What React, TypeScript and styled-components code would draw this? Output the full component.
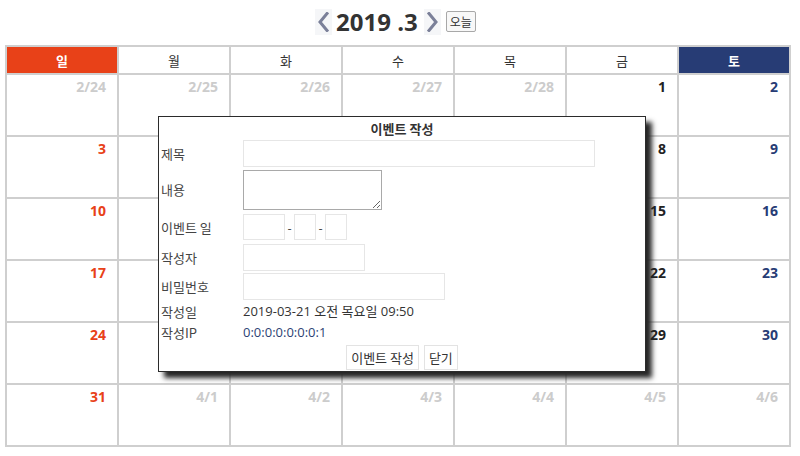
import React from "react";
import styled, { createGlobalStyle } from "styled-components";

const GlobalStyle = createGlobalStyle`
  html, body { margin: 0; padding: 0; background: #fff; }
  body { font-family: "Open Sans", "Noto Sans CJK KR", sans-serif; color: #333; }
`;

const SUN = "#e84118";
const SAT = "#273c75";

const Page = styled.div`
  position: relative;
  width: 800px;
  height: 456px;
  padding: 0 0 0 5px;
  box-sizing: border-box;
`;

const TitleBar = styled.div`
  height: 45px;
  display: flex;
  align-items: center;
  justify-content: center;
  padding: 0 14px 2px 0;
  box-sizing: border-box;
`;

const Arrow = styled.button`
  width: 17px;
  height: 26px;
  border: none;
  padding: 0;
  background: #f5f6f8;
  display: flex;
  align-items: center;
  justify-content: center;
  cursor: pointer;
`;

const Heading = styled.h1`
  margin: 0 6px 0 4px;
  font-family: "Open Sans", sans-serif;
  font-size: 24px;
  font-weight: 700;
  color: #333;
  white-space: pre;
  line-height: 32px;
`;

const TodayButton = styled.button`
  margin-left: 5px;
  height: 21px;
  padding: 0 3px;
  border: 1px solid #a8a8a8;
  border-radius: 2px;
  background: #f8f8f8;
  font-family: "Noto Sans CJK KR", sans-serif;
  font-size: 12px;
  color: #333;
  line-height: 19px;
`;

const Grid = styled.div`
  display: grid;
  grid-template-columns: repeat(7, 110px);
  grid-template-rows: 26px repeat(6, 60px);
  gap: 2px;
  padding: 2px;
  width: 786px;
  box-sizing: border-box;
  background: #cfcfcf;
`;

const HeadCell = styled.div<{ $bg?: string }>`
  background: ${(p) => p.$bg || "#fff"};
  color: ${(p) => (p.$bg ? "#fff" : "#333")};
  font-family: "Noto Sans CJK KR", sans-serif;
  font-size: 13px;
  font-weight: ${(p) => (p.$bg ? 700 : 400)};
  display: flex;
  align-items: center;
  justify-content: center;
`;

const DayCell = styled.div<{ $color: string }>`
  background: #fff;
  color: ${(p) => p.$color};
  font-family: "Open Sans", sans-serif;
  font-size: 14px;
  font-weight: 700;
  text-align: right;
  padding: 2px 11px 0 0;
  line-height: 19px;
`;

const Modal = styled.div`
  position: absolute;
  left: 158px;
  top: 116px;
  width: 488px;
  height: 256px;
  box-sizing: border-box;
  border: 1px solid #2b2b2b;
  background: #fff;
  box-shadow: 6px 6px 5px #262626;
  padding: 0 0 0 2px;
  display: flex;
  flex-direction: column;
  font-family: "Noto Sans CJK KR", sans-serif;
  font-size: 13px;
  line-height: 17px;
  color: #333;
`;

const ModalTitle = styled.div`
  height: 22px;
  display: flex;
  align-items: center;
  justify-content: center;
  font-weight: 700;
  font-size: 13px;
  padding-right: 2px;
`;

const Row = styled.div<{ $h: number }>`
  height: ${(p) => p.$h}px;
  display: flex;
  align-items: center;
`;

const Label = styled.label`
  width: 82px;
  flex: none;
  color: #444;
  line-height: 17px;
`;

const Field = styled.input<{ $w: number }>`
  width: ${(p) => p.$w}px;
  height: 27px;
  box-sizing: border-box;
  border: 1px solid #e6e6e6;
  padding: 0 4px;
  outline: none;
  font-size: 13px;
`;

const SmallField = styled(Field)`
  height: 26px;
`;

const Dash = styled.span`
  width: 9px;
  text-align: center;
  font-size: 12px;
  color: #333;
`;

const Memo = styled.textarea`
  width: 139px;
  height: 40px;
  box-sizing: border-box;
  border: 1px solid #a9a9a9;
  padding: 2px;
  margin: 0;
  outline: none;
  font-size: 13px;
`;

const Value = styled.span<{ $ip?: boolean }>`
  color: ${(p) => (p.$ip ? "#2d3f74" : "#333")};
  font-family: "Open Sans", "Noto Sans CJK KR", sans-serif;
  font-size: 13px;
  line-height: 17px;
`;

const Actions = styled.div`
  height: 28px;
  display: flex;
  align-items: center;
  justify-content: center;
  gap: 5px;
  padding-right: 2px;
`;

const Button = styled.button`
  height: 25px;
  padding: 0 4px;
  border: 1px solid #e3e3e3;
  background: #fff;
  font-family: "Noto Sans CJK KR", sans-serif;
  font-size: 13px;
  color: #333;
  line-height: 23px;
`;

const Chevron = ({ right }: { right?: boolean }) => (
  <svg width="11" height="20" viewBox="0 0 11 20">
    <polyline
      points={right ? "2,1.5 9,10 2,18.5" : "9,1.5 2,10 9,18.5"}
      fill="none"
      stroke="#7b8099"
      strokeWidth="3"
      strokeLinecap="square"
    />
  </svg>
);

type Day = { label: string; other: boolean };

const buildDays = (): Day[] => {
  const days: Day[] = [];
  for (let d = 24; d <= 28; d++) days.push({ label: `2/${d}`, other: true });
  for (let d = 1; d <= 31; d++) days.push({ label: `${d}`, other: false });
  for (let d = 1; d <= 6; d++) days.push({ label: `4/${d}`, other: true });
  return days;
};

const weekNames = ["일", "월", "화", "수", "목", "금", "토"];

const App = () => {
  const days = buildDays();

  const dayColor = (day: Day, index: number) => {
    if (day.other) return "#cccccc";
    if (index % 7 === 0) return SUN;
    if (index % 7 === 6) return SAT;
    return "#222";
  };

  return (
    <Page>
      <GlobalStyle />
      <TitleBar>
        <Arrow>
          <Chevron />
        </Arrow>
        <Heading>{"2019 .3"}</Heading>
        <Arrow>
          <Chevron right />
        </Arrow>
        <TodayButton>오늘</TodayButton>
      </TitleBar>

      <Grid>
        {weekNames.map((name, i) => (
          <HeadCell key={name} $bg={i === 0 ? SUN : i === 6 ? SAT : undefined}>
            {name}
          </HeadCell>
        ))}
        {days.map((day, i) => (
          <DayCell key={day.label + i} $color={dayColor(day, i)}>
            {day.label}
          </DayCell>
        ))}
      </Grid>

      <Modal>
        <ModalTitle>이벤트 작성</ModalTitle>
        <Row $h={29}>
          <Label>제목</Label>
          <Field $w={352} />
        </Row>
        <Row $h={43}>
          <Label>내용</Label>
          <Memo />
        </Row>
        <Row $h={32}>
          <Label>이벤트 일</Label>
          <SmallField $w={42} />
          <Dash>-</Dash>
          <SmallField $w={22} />
          <Dash>-</Dash>
          <SmallField $w={22} />
        </Row>
        <Row $h={29}>
          <Label>작성자</Label>
          <Field $w={122} />
        </Row>
        <Row $h={29}>
          <Label>비밀번호</Label>
          <Field $w={202} type="password" />
        </Row>
        <Row $h={21}>
          <Label>작성일</Label>
          <Value>2019-03-21 오전 목요일 09:50</Value>
        </Row>
        <Row $h={21}>
          <Label>작성IP</Label>
          <Value $ip>0:0:0:0:0:0:0:1</Value>
        </Row>
        <Actions>
          <Button>이벤트 작성</Button>
          <Button>닫기</Button>
        </Actions>
      </Modal>
    </Page>
  );
};

export default App;
